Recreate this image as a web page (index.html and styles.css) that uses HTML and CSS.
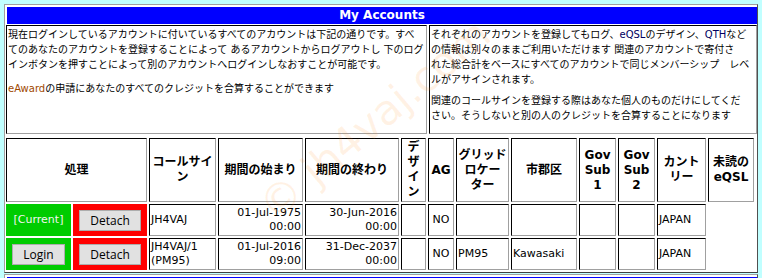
FILE: index.html
```html
<!DOCTYPE html>
<html lang="ja">
<head>
  <meta charset="UTF-8">
  <meta name="viewport" content="width=device-width, initial-scale=1.0">
  <title>My Accounts</title>
  <link rel="stylesheet" href="styles.css">
</head>
<body>

  <div class="panel">
    <div class="panel-title">My Accounts</div>

    <div class="intro">
      <div class="note">
        <p>現在ログインしているアカウントに付いているすべてのアカウントは下記の通りです。すべ<br>てのあなたのアカウントを登録することによって あるアカウントからログアウトし 下のログ<br>インボタンを押すことによって別のアカウントへログインしなおすことが可能です。</p>
        <p><span class="award">eAward</span>の申請にあなたのすべてのクレジットを合算することができます</p>
      </div>
      <div class="note">
        <p>それぞれのアカウントを登録してもログ、<span class="term">eQSL</span>のデザイン、<span class="term">QTH</span>など<br>の情報は別々のままご利用いただけます 関連のアカウントで寄付さ<br>れた総合計をベースにすべてのアカウントで同じメンバーシップ　レベ<br>ルがアサインされます。</p>
        <p class="short">関連のコールサインを登録する際はあなた個人のものだけにしてくだ<br>さい。そうしないと別の人のクレジットを合算することになります</p>
      </div>
    </div>

    <table class="accounts">
      <colgroup>
        <col style="width: 65px">
        <col style="width: 74px">
        <col style="width: 67px">
        <col style="width: 85px">
        <col style="width: 94px">
        <col style="width: 25px">
        <col style="width: 26px">
        <col style="width: 53px">
        <col style="width: 66px">
        <col style="width: 37px">
        <col style="width: 37px">
        <col style="width: 49px">
        <col style="width: 46px">
      </colgroup>
      <thead>
        <tr>
          <th colspan="2">処理</th>
          <th>コールサイン</th>
          <th>期間の始まり</th>
          <th>期間の終わり</th>
          <th>デザイン</th>
          <th>AG</th>
          <th>グリッド<br>ロケー<br>ター</th>
          <th>市郡区</th>
          <th>Gov Sub 1</th>
          <th>Gov Sub 2</th>
          <th>カントリー</th>
          <th>未読の eQSL</th>
        </tr>
      </thead>
      <tbody>
        <tr>
          <td class="cell-ok current">[Current]</td>
          <td class="cell-detach"><button class="btn">Detach</button></td>
          <td>JH4VAJ</td>
          <td class="date">01-Jul-1975<br>00:00</td>
          <td class="date">30-Jun-2016<br>00:00</td>
          <td></td>
          <td class="center">NO</td>
          <td></td>
          <td></td>
          <td></td>
          <td></td>
          <td>JAPAN</td>
        </tr>
        <tr>
          <td class="cell-ok"><button class="btn">Login</button></td>
          <td class="cell-detach"><button class="btn">Detach</button></td>
          <td>JH4VAJ/1 (PM95)</td>
          <td class="date">01-Jul-2016<br>09:00</td>
          <td class="date">31-Dec-2037<br>00:00</td>
          <td></td>
          <td class="center">NO</td>
          <td>PM95</td>
          <td>Kawasaki</td>
          <td></td>
          <td></td>
          <td>JAPAN</td>
        </tr>
      </tbody>
    </table>
  </div>

  <div class="panel">
    <div class="panel-title"></div>
  </div>

  <div class="watermark">© jh4vaj.com</div>

</body>
</html>
```

FILE: styles.css
```css
* {
  box-sizing: border-box;
}

body {
  margin: 0;
  padding: 4px 0 0 4px;
  background-color: #c0ffff;
  font-family: "DejaVu Sans", "Noto Sans CJK JP", sans-serif;
  color: #000;
}

.panel {
  width: 754px;
  background-color: #fff;
  border: 1px solid;
  border-color: #a0a0a0 #505050 #404040 #a0a0a0;
  padding-top: 2px;
  margin-bottom: 1px;
}

.panel-title {
  margin-left: 2px;
  height: 17px;
  line-height: 17px;
  background-color: #0000ff;
  color: #fff;
  font-size: 12px;
  font-weight: bold;
  text-align: center;
}

.intro {
  display: grid;
  grid-template-columns: 421px 1fr;
  gap: 2px;
  height: 109px;
  margin: 1px 0 0 1px;
}

.note {
  border: 1px solid;
  border-color: #000 #a0a0a0 #a0a0a0 #000;
  padding: 1px 1px;
  font-size: 10px;
  line-height: 15px;
}

.note p {
  margin: 0 0 9px;
  white-space: nowrap;
}

.note p.short {
  margin-top: -3px;
}

.award {
  color: #a04800;
}

.term {
  color: #000060;
}

.accounts {
  width: 752px;
  table-layout: fixed;
  border-spacing: 2px;
  margin: 2px 0 0 -1px;
}

.accounts th,
.accounts td {
  border: 1px solid;
  border-color: #000 #a0a0a0 #a0a0a0 #000;
  padding: 1px;
  vertical-align: middle;
}

.accounts th {
  font-size: 12px;
  line-height: 15px;
  font-weight: bold;
  text-align: center;
}

.accounts td {
  font-size: 11px;
  line-height: 14px;
  height: 32px;
  text-align: left;
}

.accounts td.date {
  text-align: right;
}

.accounts td.center {
  text-align: center;
}

.accounts td.cell-ok {
  background-color: #00cc00;
  border-color: #00cc00;
  text-align: center;
}

.accounts td.cell-detach {
  background-color: #ff0000;
  border-color: #ff0000;
  text-align: center;
}

.current {
  color: #f4f4f4;
}

.btn {
  height: 21px;
  padding: 0 10px;
  background-color: #e1e1e1;
  border: 1px solid #adadad;
  font-family: "Open Sans", sans-serif;
  font-size: 12px;
  line-height: 19px;
  color: #000;
}

.watermark {
  position: absolute;
  left: 205px;
  top: 95px;
  width: 340px;
  line-height: 50px;
  text-align: center;
  font-size: 42px;
  color: rgba(255, 150, 40, 0.12);
  transform: rotate(-40deg);
  pointer-events: none;
}
```
